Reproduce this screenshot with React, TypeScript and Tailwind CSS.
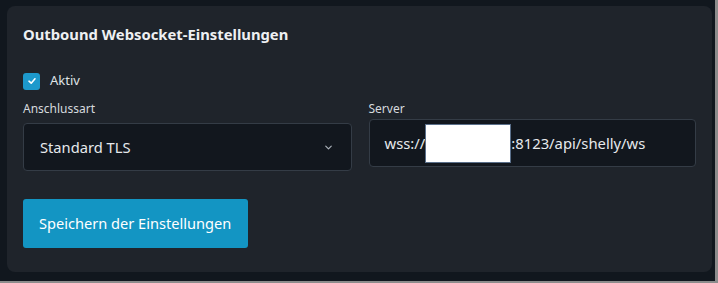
import React from "react";

export default function App() {
  return (
    <div className="w-[718px] h-[283px] bg-[#11171e] flex" style={{ fontFamily: '"Noto Sans", "Open Sans", sans-serif' }}>
      <div className="flex-1 flex flex-col">
        <div className="h-[281px] pt-[6px] pl-[7px] pr-[3px]">
          <div className="w-[705px] h-[266px] rounded-[8px] bg-[#1f242b] pl-[16px] pr-[16px] pt-[18px]">
            <h2 className="text-[14.8px] font-bold text-[#eef0f2] leading-[20px]">Outbound Websocket-Einstellungen</h2>
            <label className="mt-[28px] flex items-center gap-[10px] h-[18px]">
              <span className="w-[17px] h-[17px] rounded-[3px] bg-[#1d99cc] flex items-center justify-center">
                <svg width="10" height="10" viewBox="0 0 10 10" fill="none">
                  <path d="M2 5.2 L4.2 7.2 L8 2.8" stroke="white" strokeWidth="1.6" strokeLinecap="round" strokeLinejoin="round" />
                </svg>
              </span>
              <span className="text-[13px] text-[#dfe3e7]">Aktiv</span>
            </label>
            <div className="mt-[10px] flex gap-[17px]">
              <div className="w-[329px] flex flex-col">
                <span className="text-[12px] leading-[18px] text-[#d6dade]">Anschlussart</span>
                <div className="mt-[5px] h-[48px] rounded-[4px] border border-[#343c46] bg-[#12171e] flex items-center justify-between pl-[16px] pr-[17px]">
                  <span className="text-[14.7px] text-[#e6e9ec]">Standard TLS</span>
                  <svg width="11" height="11" viewBox="0 0 12 12" fill="none">
                    <path d="M3 4.5 L6 7.5 L9 4.5" stroke="#aab1b9" strokeWidth="1.3" strokeLinecap="round" strokeLinejoin="round" />
                  </svg>
                </div>
              </div>
              <div className="w-[328px] flex flex-col">
                <span className="text-[12px] leading-[18px] text-[#d6dade]">Server</span>
                <div className="mt-[1px] h-[48px] rounded-[4px] border border-[#343c46] bg-[#12171e] flex items-center pl-[15px]">
                  <span className="text-[14.8px] text-[#e6e9ec]">wss://</span>
                  <span className="w-[86px] h-[39px] bg-white border border-[#5a6f8a]" />
                  <span className="text-[14.8px] text-[#e6e9ec]">:8123/api/shelly/ws</span>
                </div>
              </div>
            </div>
            <button className="mt-[28px] h-[49px] w-[225px] rounded-[3px] bg-[#1395c3] text-white text-[14.6px] text-left pl-[16px]">
              Speichern der Einstellungen
            </button>
          </div>
        </div>
        <div className="h-[2px] bg-[#8c8c8c]" />
      </div>
      <div className="w-[3px] bg-[#8c8c8c]" />
    </div>
  );
}
